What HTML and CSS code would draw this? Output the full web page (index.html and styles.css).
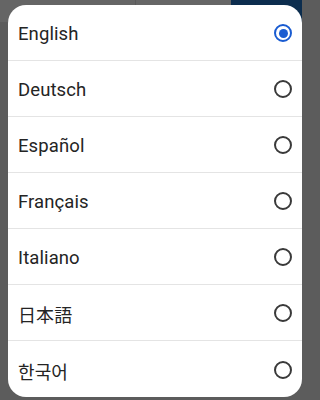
FILE: index.html
```html
<!DOCTYPE html>
<html>
<head>
<meta charset="utf-8">
<link rel="stylesheet" href="styles.css">
</head>
<body>
<div class="backdrop">
  <div class="strip">
    <div class="seg seg-a"></div>
    <div class="seg seg-b"></div>
    <div class="seg seg-c"></div>
    <div class="seg seg-d"></div>
    <div class="seg seg-e"></div>
  </div>
  <div class="dialog">
    <div class="row"><span class="label">English</span><span class="radio checked"></span></div>
    <div class="row"><span class="label">Deutsch</span><span class="radio"></span></div>
    <div class="row"><span class="label">Español</span><span class="radio"></span></div>
    <div class="row"><span class="label">Français</span><span class="radio"></span></div>
    <div class="row"><span class="label">Italiano</span><span class="radio"></span></div>
    <div class="row"><span class="label cjk">日本語</span><span class="radio"></span></div>
    <div class="row last"><span class="label cjk">한국어</span><span class="radio"></span></div>
  </div>
</div>
</body>
</html>
```
FILE: styles.css
```css
html, body {
  margin: 0;
  padding: 0;
  width: 310px;
  height: 400px;
  overflow: hidden;
  background: #5c5c5c;
}
.backdrop {
  display: flex;
  flex-direction: column;
  width: 310px;
  height: 400px;
}
.strip {
  display: flex;
  height: 22px;
  flex: none;
}
.seg { height: 100%; }
.seg-a { width: 135px; background: #656565; }
.seg-b { width: 1px; background: #5a5a5a; }
.seg-c { width: 95px; background: #666666; }
.seg-d { width: 71px; background: #0c2d4e; }
.seg-e { flex: 1; background: #5c5c5c; }
.dialog {
  margin: -17px 8px 0 8px;
  background: #ffffff;
  border-radius: 18px;
  overflow: hidden;
  display: flex;
  flex-direction: column;
}
.row {
  height: 56px;
  box-sizing: border-box;
  display: flex;
  align-items: center;
  justify-content: space-between;
  padding: 1px 10px 0 10px;
  border-bottom: 1px solid #e4e4e4;
}
.row.last { border-bottom: none; }
.label {
  font-family: Roboto, "Noto Sans CJK KR", "Noto Sans CJK JP", sans-serif;
  font-size: 18.5px;
  color: #242424;
  letter-spacing: 0.1px;
  padding-top: 2px;
}
.label.cjk {
  font-family: "Noto Sans CJK KR", "Noto Sans CJK JP", sans-serif;
  font-size: 18px;
}
.radio {
  width: 18px;
  height: 18px;
  box-sizing: border-box;
  border: 2px solid #3a3a3a;
  border-radius: 50%;
  display: flex;
  align-items: center;
  justify-content: center;
}
.radio.checked {
  border-color: #1a5cd1;
}
.radio.checked::after {
  content: "";
  width: 9px;
  height: 9px;
  border-radius: 50%;
  background: #1a5cd1;
}
```
